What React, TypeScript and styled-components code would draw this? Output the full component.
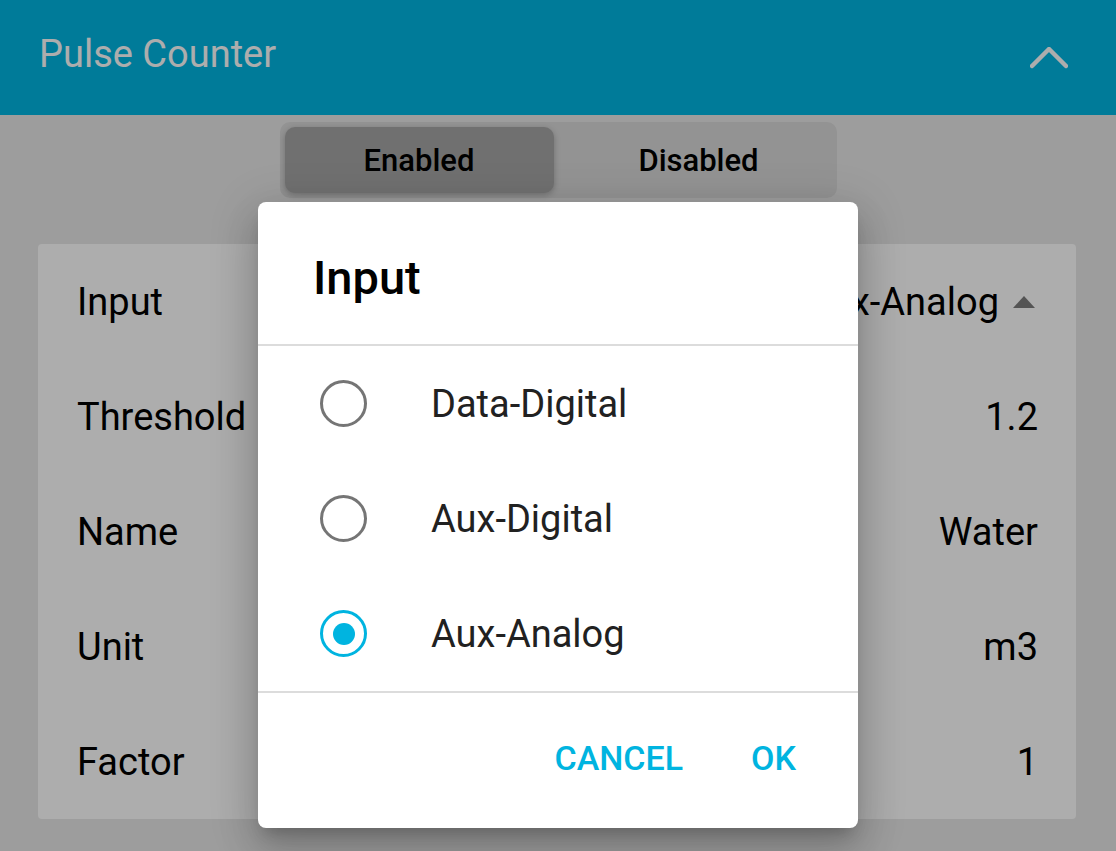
import React, { useState } from 'react'
import styled, { createGlobalStyle } from 'styled-components'

const GlobalStyle = createGlobalStyle`
  body {
    margin: 0;
    font-family: Roboto, "Liberation Sans", Arial, sans-serif;
  }
`

const Page = styled.div`
  position: relative;
  width: 1116px;
  height: 851px;
  overflow: hidden;
  background-color: #e8e8e8;
`

const AppBar = styled.header`
  display: flex;
  align-items: center;
  justify-content: space-between;
  height: 115px;
  padding: 0 48px 0 39px;
  box-sizing: border-box;
  background-color: #00b5e2;
`

const Title = styled.h1`
  margin: 0 0 7px 0;
  font-size: 38px;
  font-weight: 400;
  color: #ffffff;
`

const Segmented = styled.div`
  display: flex;
  width: 557px;
  height: 76px;
  margin: 7px auto 0 auto;
  padding: 5px;
  box-sizing: border-box;
  border-radius: 10px;
  background-color: #d9d9d9;
`

const Segment = styled.button<{ $active?: boolean }>`
  flex: ${p => (p.$active ? '0 0 269px' : '1')};
  padding: ${p => (p.$active ? '0' : '0 0 0 12px')};
  border: 0;
  border-radius: 10px;
  font-family: Roboto, sans-serif;
  font-size: 31px;
  font-weight: 500;
  color: #000000;
  background-color: ${p => (p.$active ? '#a6a6a6' : 'transparent')};
  box-shadow: ${p => (p.$active ? '0 2px 6px rgba(0,0,0,0.25)' : 'none')};
`

const Card = styled.section`
  margin: 46px 40px 0 38px;
  border-radius: 4px;
  background-color: #ffffff;
`

const Row = styled.div`
  display: flex;
  align-items: center;
  justify-content: space-between;
  height: 115px;
  padding: 0 38px 0 39px;
  font-size: 38px;
  color: #000000;
`

const Value = styled.span`
  display: flex;
  align-items: center;
  gap: 14px;
`

const Caret = styled.span`
  width: 0;
  height: 0;
  margin-right: 3px;
  border-left: 11px solid transparent;
  border-right: 11px solid transparent;
  border-bottom: 12px solid #7d7d7d;
`

const Scrim = styled.div`
  position: absolute;
  inset: 0;
  display: flex;
  justify-content: center;
  align-items: flex-start;
  padding-top: 202px;
  background-color: rgba(0, 0, 0, 0.32);
`

const Dialog = styled.div`
  width: 600px;
  border-radius: 8px;
  background-color: #ffffff;
  box-shadow: 0 24px 38px 3px rgba(0,0,0,.14), 0 9px 46px 8px rgba(0,0,0,.12), 0 11px 15px -7px rgba(0,0,0,.2);
`

const DialogTitle = styled.h2`
  margin: 0;
  height: 144px;
  padding: 48px 0 0 55px;
  box-sizing: border-box;
  font-size: 47px;
  font-weight: 500;
  color: #000000;
  border-bottom: 2px solid #dcdcdc;
`

const Options = styled.div`
  display: flex;
  flex-direction: column;
  border-bottom: 2px solid #dcdcdc;
`

const Option = styled.label`
  display: flex;
  align-items: center;
  height: 115px;
  padding-left: 62px;
  font-size: 38px;
  color: #212121;
  cursor: pointer;
`

const Radio = styled.span<{ $checked?: boolean }>`
  display: flex;
  align-items: center;
  justify-content: center;
  width: 47px;
  height: 47px;
  margin: 0 64px 0 0;
  box-sizing: border-box;
  border-radius: 50%;
  border: 3.5px solid ${p => (p.$checked ? '#00b4e0' : '#757575')};
  &::after {
    content: '';
    width: 22px;
    height: 22px;
    border-radius: 50%;
    background-color: ${p => (p.$checked ? '#00b4e0' : 'transparent')};
  }
`

const Actions = styled.div`
  display: flex;
  justify-content: flex-end;
  align-items: center;
  gap: 68px;
  height: 135px;
  padding: 0 62px 6px 0;
  box-sizing: border-box;
`

const TextButton = styled.button`
  border: 0;
  padding: 0;
  background: none;
  font-family: Roboto, sans-serif;
  font-size: 34px;
  font-weight: 500;
  color: #00b4e0;
`

const rows = [
  { label: 'Input', value: 'Aux-Analog' },
  { label: 'Threshold', value: '1.2' },
  { label: 'Name', value: 'Water' },
  { label: 'Unit', value: 'm3' },
  { label: 'Factor', value: '1' },
]

const options = ['Data-Digital', 'Aux-Digital', 'Aux-Analog']

export default function App() {
  const [selected, setSelected] = useState('Aux-Analog')

  return (
    <>
      <GlobalStyle />
      <Page>
        <AppBar>
          <Title>Pulse Counter</Title>
          <svg width="38" height="22" viewBox="0 0 38 22">
            <polyline points="2,19 19,2 36,19" fill="none" stroke="#ffffff" strokeWidth="4.5" strokeLinecap="round" strokeLinejoin="round" />
          </svg>
        </AppBar>

        <Segmented>
          <Segment $active>Enabled</Segment>
          <Segment>Disabled</Segment>
        </Segmented>

        <Card>
          {rows.map((r, i) => (
            <Row key={r.label}>
              <span>{r.label}</span>
              <Value>
                {r.value}
                {i === 0 && <Caret />}
              </Value>
            </Row>
          ))}
        </Card>

        <Scrim>
          <Dialog>
            <DialogTitle>Input</DialogTitle>
            <Options>
              {options.map(o => (
                <Option key={o} onClick={() => setSelected(o)}>
                  <Radio $checked={selected === o} />
                  {o}
                </Option>
              ))}
            </Options>
            <Actions>
              <TextButton>CANCEL</TextButton>
              <TextButton>OK</TextButton>
            </Actions>
          </Dialog>
        </Scrim>
      </Page>
    </>
  )
}
